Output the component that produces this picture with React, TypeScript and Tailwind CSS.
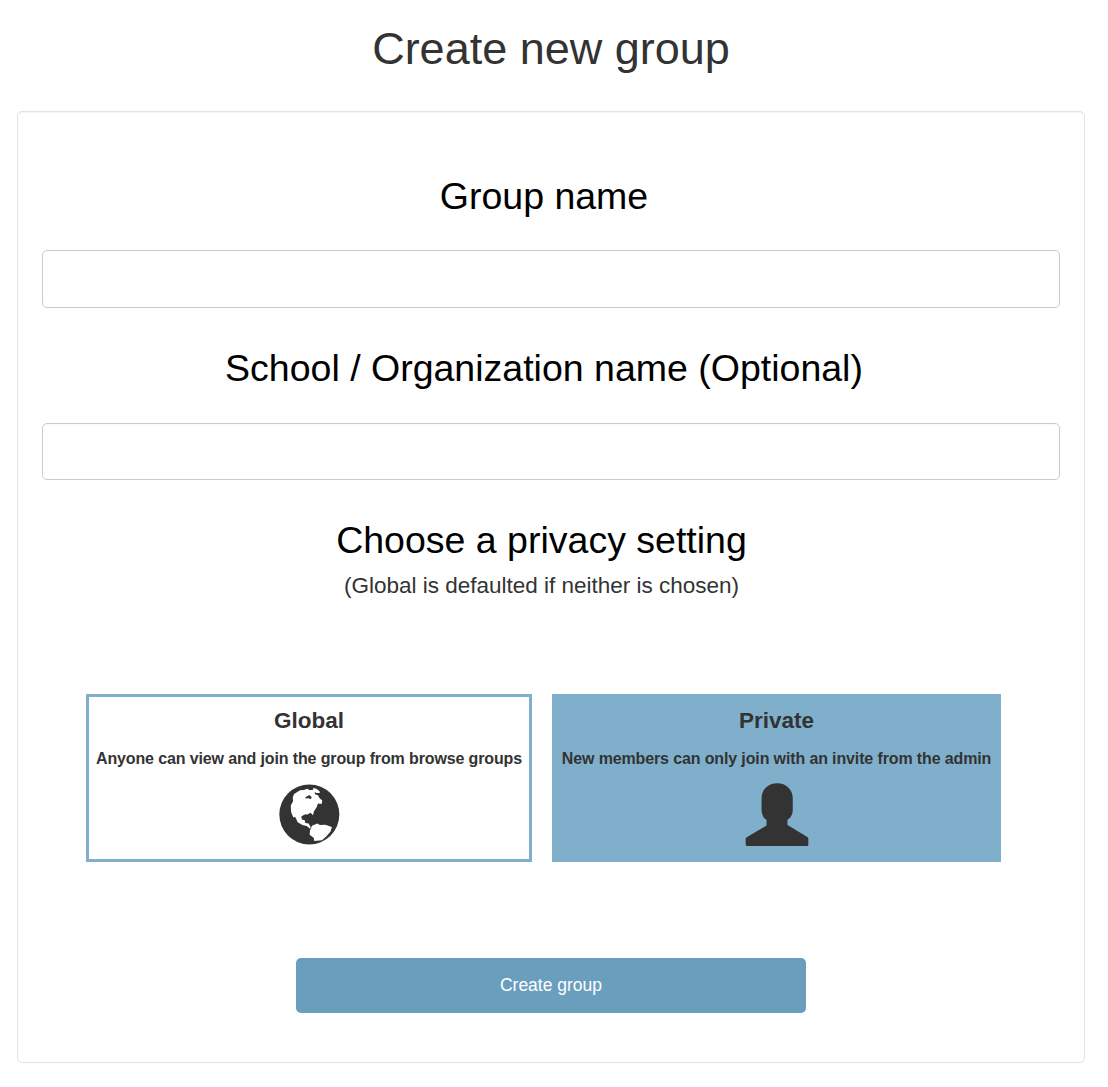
import React from 'react';

function GlobeIcon() {
  return (
    <svg viewBox="41 26 183 184" className="h-[61px] w-[61px]" aria-hidden="true">
      <circle cx="132" cy="118" r="90.5" fill="#333333" />
      <path
        fill="#ffffff"
        d="M86 56L104 45L116 44L125 40L134 45L144 43L143 38L153 40L158 44L164 49L163 53L155 53L148 51L149 57L158 60L163 69L171 76L169 86L158 85L154 96L146 108L143 120L136 113L126 118L119 118L108 124L110 133L118 135L120 144L130 145L136 156L134 161L124 153L111 150L97 141L89 125L84 127L77 111L76 91L83 78L82 66Z"
      />
      <path fill="#ffffff" d="M140 152L156 145L164 150L180 149L200 156L196 169L183 184L170 196L147 198L145 188L133 179L134 166Z" />
      <path fill="#333333" d="M120 66L132 59L139 65L137 72L130 69L121 70ZM109 124L119 118L129 121L134 132L128 137L125 129L117 133L110 132Z" />
    </svg>
  );
}

function PersonIcon() {
  return (
    <svg viewBox="45 23 191 190" className="h-[63px] w-[64px]" aria-hidden="true">
      <path
        fill="#333333"
        d="M141 24C114 24 94 43 94 69V104C94 119 101 130 109 134V151L48 187Q46 188 46 191V209Q46 213 50 213H231Q235 213 235 209V191Q235 188 232 186L172 150V134C181 130 188 119 188 104V69C188 43 168 24 141 24Z"
      />
    </svg>
  );
}

const card = 'flex h-[168px] flex-col items-center border-[3px] border-[#7fafcb] text-[#333333]';
const description = 'mt-[13px] whitespace-nowrap text-[16px] font-bold leading-5 tracking-[-0.13px]';

export default function App() {
  return (
    <main className="h-[1087px] bg-white pl-[17px] pt-6 font-['Liberation_Sans',Arial,sans-serif] text-[#333333]">
      <h1 className="mb-[37px] h-[50px] w-[1068px] text-center text-[45px] leading-[50px]">Create new group</h1>
      <form
        className="flex h-[952px] w-[1068px] flex-col rounded-[5px] border border-[#e3e3e3] px-6 pt-[59px] shadow-[inset_0_1px_1px_rgba(0,0,0,0.05)]"
        onSubmit={(e) => e.preventDefault()}
      >
        <label htmlFor="group" className="mb-[29px] w-[1004px] text-center text-[37.5px] leading-[50px] text-black">
          Group name
        </label>
        <input id="group" className="h-[58px] shrink-0 rounded-[5px] border border-[#cccccc] px-4 text-[22px] shadow-[inset_0_1px_1px_rgba(0,0,0,0.02)]" />
        <label htmlFor="school" className="mb-[30px] mt-[35px] w-[1004px] text-center text-[37.5px] leading-[50px] text-black">
          School / Organization name (Optional)
        </label>
        <input id="school" className="h-[57px] shrink-0 rounded-[5px] border border-[#cccccc] px-4 text-[22px] shadow-[inset_0_1px_1px_rgba(0,0,0,0.02)]" />
        <h2 className="mt-[35px] w-[999px] text-center text-[37.5px] leading-[50px] text-black">Choose a privacy setting</h2>
        <p className="mt-[6px] w-[999px] text-center text-[22.5px] leading-[30px]">(Global is defaulted if neither is chosen)</p>
        <div className="ml-11 mt-[93px] flex gap-5">
          <button type="button" className={`${card} w-[446px] bg-white`}>
            <span className="mt-[9px] text-[22.5px] font-bold leading-[30px]">Global</span>
            <span className={`${description} mb-[15px]`}>Anyone can view and join the group from browse groups</span>
            <GlobeIcon />
          </button>
          <button type="button" className={`${card} w-[449px] bg-[#7fafcb]`}>
            <span className="mt-[9px] text-[22.5px] font-bold leading-[30px]">Private</span>
            <span className={`${description} mb-[14px]`}>New members can only join with an invite from the admin</span>
            <PersonIcon />
          </button>
        </div>
        <button type="submit" className="mt-24 h-[55px] w-[510px] self-center rounded-[5px] bg-[#6a9ebd] text-[17.5px] text-white">
          Create group
        </button>
      </form>
    </main>
  );
}
